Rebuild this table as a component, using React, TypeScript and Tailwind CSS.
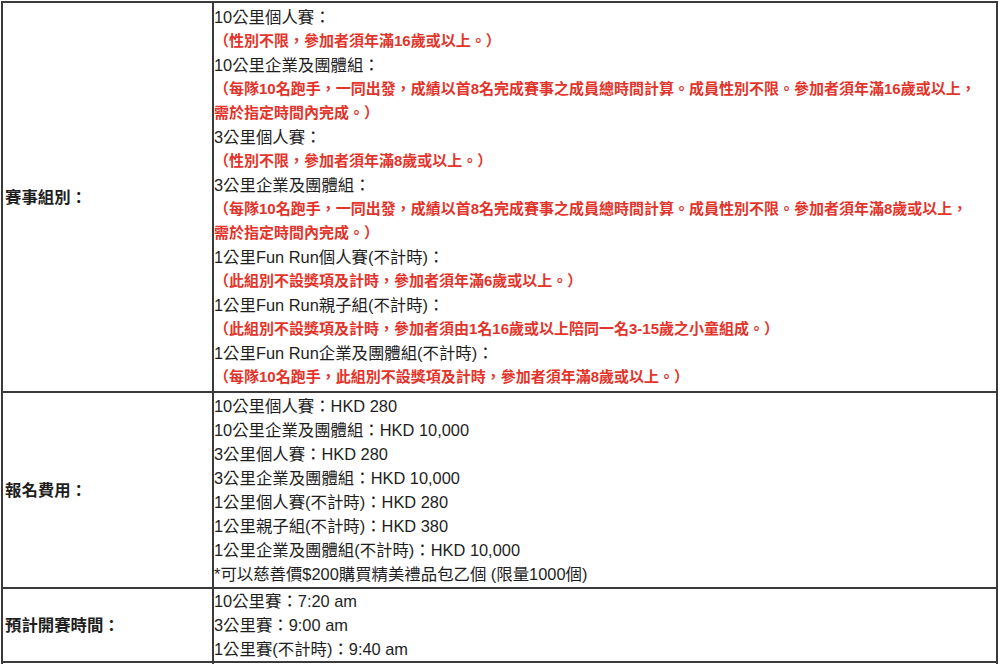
import React from "react";

const FONT = { fontFamily: '"Liberation Sans", "Noto Sans CJK TC", sans-serif' };

function B({ children }: { children: React.ReactNode }) {
  return <div className="h-[24px] leading-[24px] whitespace-nowrap text-[16.4px] text-[#1e1e1e]">{children}</div>;
}
function R({ children }: { children: React.ReactNode }) {
  return <div className="h-[24px] leading-[24px] whitespace-nowrap text-[15px] font-bold text-[#e3342b]">{children}</div>;
}

function Row({ label, children, pad, last }: { label: string; children?: React.ReactNode; pad: string; last?: boolean }) {
  return (
    <div className={`flex ${last ? "" : "border-b-2 border-[#3a3a3a]"}`}>
      <div className="w-[211px] shrink-0 border-r-2 border-[#3a3a3a] flex items-center pl-[2px] text-[16.4px] font-bold text-[#1e1e1e]">
        {label}
      </div>
      <div className={`flex-1 ${pad}`}>{children}</div>
    </div>
  );
}

export default function App() {
  return (
    <div className="w-[1000px] h-[664px] overflow-hidden bg-white" style={FONT}>
      <div className="ml-[1px] mt-[1px] w-[997px] border-2 border-b-0 border-[#3a3a3a]">
        <Row label="賽事組別：" pad="py-[2px]">
          <B>10公里個人賽：</B>
          <R>（性別不限，參加者須年滿16歲或以上。）</R>
          <B>10公里企業及團體組：</B>
          <R>（每隊10名跑手，一同出發，成績以首8名完成賽事之成員總時間計算。成員性別不限。參加者須年滿16歲或以上，</R>
          <R>需於指定時間內完成。）</R>
          <B>3公里個人賽：</B>
          <R>（性別不限，參加者須年滿8歲或以上。）</R>
          <B>3公里企業及團體組：</B>
          <R>（每隊10名跑手，一同出發，成績以首8名完成賽事之成員總時間計算。成員性別不限。參加者須年滿8歲或以上，</R>
          <R>需於指定時間內完成。）</R>
          <B>1公里Fun Run個人賽(不計時)：</B>
          <R>（此組別不設獎項及計時，參加者須年滿6歲或以上。）</R>
          <B>1公里Fun Run親子組(不計時)：</B>
          <R>（此組別不設獎項及計時，參加者須由1名16歲或以上陪同一名3-15歲之小童組成。）</R>
          <B>1公里Fun Run企業及團體組(不計時)：</B>
          <R>（每隊10名跑手，此組別不設獎項及計時，參加者須年滿8歲或以上。）</R>
        </Row>
        <Row label="報名費用：" pad="py-[1px]">
          <B>10公里個人賽：HKD 280</B>
          <B>10公里企業及團體組：HKD 10,000</B>
          <B>3公里個人賽：HKD 280</B>
          <B>3公里企業及團體組：HKD 10,000</B>
          <B>1公里個人賽(不計時)：HKD 280</B>
          <B>1公里親子組(不計時)：HKD 380</B>
          <B>1公里企業及團體組(不計時)：HKD 10,000</B>
          <B>*可以慈善價$200購買精美禮品包乙個 (限量1000個)</B>
        </Row>
        <Row label="預計開賽時間：" pad="py-0">
          <B>10公里賽：7:20 am</B>
          <B>3公里賽：9:00 am</B>
          <B>1公里賽(不計時)：9:40 am</B>
        </Row>
        <Row label="" pad="py-0" last>
          <div className="h-[72px]" />
        </Row>
      </div>
    </div>
  );
}
